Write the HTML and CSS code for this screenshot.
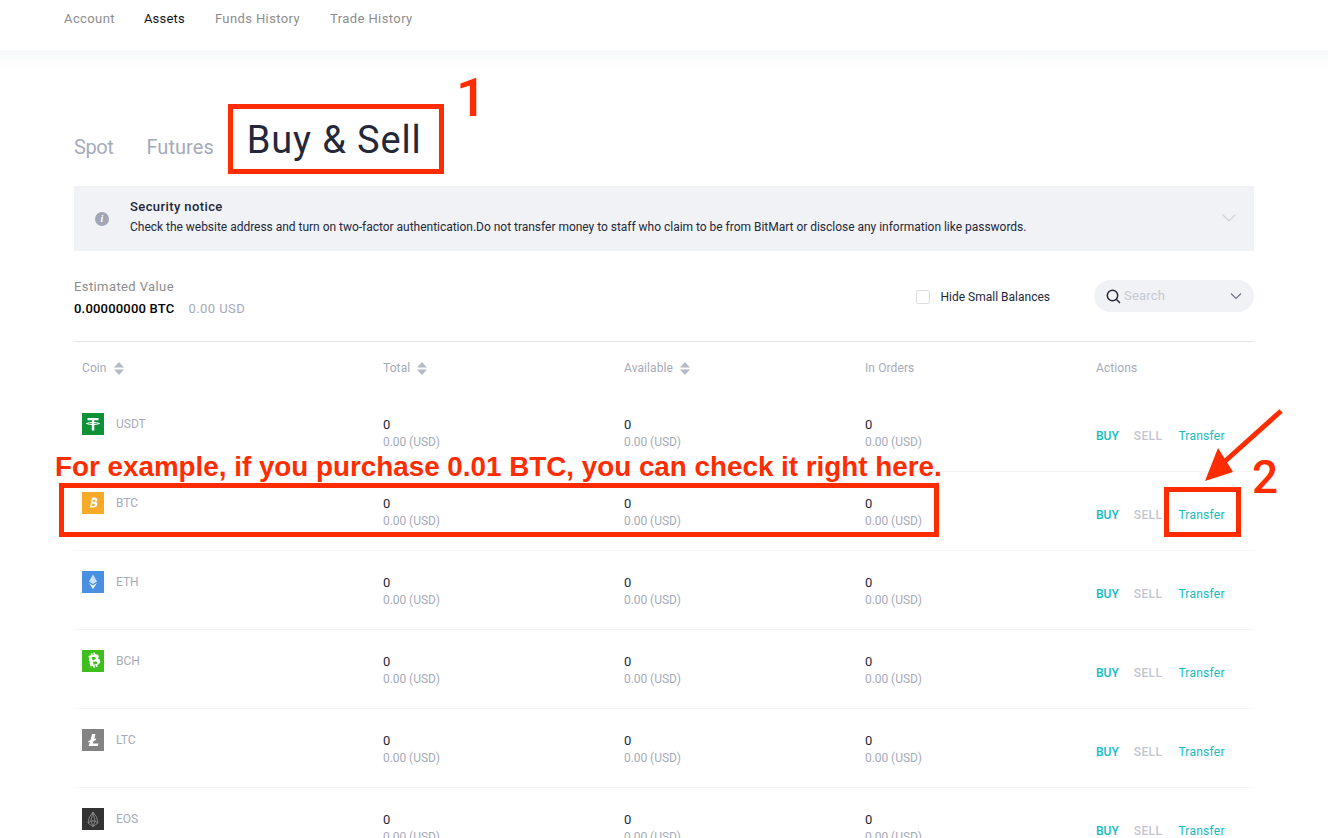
FILE: index.html
```html
<!DOCTYPE html>
<html lang="en">
<head>
<meta charset="utf-8">
<title>Assets</title>
<link rel="stylesheet" href="styles.css">
</head>
<body>
<nav class="topnav">
  <a class="navlink">Account</a>
  <a class="navlink active">Assets</a>
  <a class="navlink">Funds History</a>
  <a class="navlink">Trade History</a>
</nav>
<div class="fade"></div>
<main class="main">
  <div class="tabs">
    <span class="tab">Spot</span>
    <span class="tab">Futures</span>
    <span class="tab current">Buy &amp; Sell</span>
  </div>
  <section class="notice">
    <span class="info">i</span>
    <div class="notice-body">
      <div class="notice-title">Security notice</div>
      <div class="notice-text">Check the website address and turn on two-factor authentication.Do not transfer money to staff who claim to be from BitMart or disclose any information like passwords.</div>
    </div>
    <svg class="notice-chev" width="14" height="8" viewBox="0 0 14 8"><path d="M.5.500 7 7l6.500-6.500" fill="none" stroke="#cfd2da" stroke-width="1.200"/></svg>
  </section>
  <section class="summary">
    <div class="estimate">
      <div class="est-label">Estimated Value</div>
      <div class="est-values"><b>0.00000000 BTC</b><span>0.00 USD</span></div>
    </div>
    <label class="hide"><span class="check"></span>Hide Small Balances</label>
    <div class="search">
      <svg width="15" height="15" viewBox="0 0 15 15"><circle cx="6.500" cy="6.500" r="5.200" fill="none" stroke="#23283a" stroke-width="1.500"/><path d="m10.300 10.300 3.700 3.700" stroke="#23283a" stroke-width="1.500"/></svg>
      <span class="search-text">Search</span>
      <svg class="search-chev" width="12" height="8" viewBox="0 0 12 8"><path d="M1 1.500 6 6.500l5-5" fill="none" stroke="#6d7486" stroke-width="1.200"/></svg>
    </div>
  </section>
  <div class="table">
    <div class="row head">
      <div class="cell">Coin <svg class="sort" width="10" height="13" viewBox="0 0 10 13"><path d="M5 0 10 5.500H0zM0 7.500h10L5 13z" fill="#b6bac6"/></svg></div>
      <div class="cell">Total <svg class="sort" width="10" height="13" viewBox="0 0 10 13"><path d="M5 0 10 5.500H0zM0 7.500h10L5 13z" fill="#b6bac6"/></svg></div>
      <div class="cell">Available <svg class="sort" width="10" height="13" viewBox="0 0 10 13"><path d="M5 0 10 5.500H0zM0 7.500h10L5 13z" fill="#b6bac6"/></svg></div>
      <div class="cell">In Orders</div>
      <div class="cell">Actions</div>
    </div>

    <div class="row item">
      <div class="coin"><span class="logo usdt"><svg width="22" height="22" viewBox="0 0 22 22"><path d="M5.500 5h11v2.200h-4.200V17.500H9.800V7.200H5.500z" fill="#fff"/><path d="M4.500 10.500c3-1.300 10-1.300 13 0-3 1.400-10 1.400-13 0z" fill="none" stroke="#fff" stroke-width="1"/></svg></span><span class="sym">USDT</span></div>
      <div class="val"><span class="num">0</span><small>0.00 (USD)</small></div>
      <div class="val"><span class="num">0</span><small>0.00 (USD)</small></div>
      <div class="val"><span class="num">0</span><small>0.00 (USD)</small></div>
      <div class="acts"><a class="buy">BUY</a><a class="sell">SELL</a><a class="transfer">Transfer</a></div>
    </div>
    <div class="row item">
      <div class="coin"><span class="logo btc"><svg width="22" height="22" viewBox="0 0 22 22"><path d="M10 5.500h2.500c2 0 3 1 2.800 2.500-.1 1-.7 1.700-1.500 2 1.100.3 1.700 1.200 1.500 2.500-.3 1.900-1.600 3-3.800 3H8zm1.100 2.200-.4 2.100h1.400c.8 0 1.300-.4 1.300-1.100 0-.6-.4-1-1.100-1zm-.8 4-.5 2.300h1.600c.9 0 1.400-.5 1.400-1.300 0-.6-.5-1-1.300-1z" fill="#fff" fill-rule="evenodd"/></svg></span><span class="sym">BTC</span></div>
      <div class="val"><span class="num">0</span><small>0.00 (USD)</small></div>
      <div class="val"><span class="num">0</span><small>0.00 (USD)</small></div>
      <div class="val"><span class="num">0</span><small>0.00 (USD)</small></div>
      <div class="acts"><a class="buy">BUY</a><a class="sell">SELL</a><a class="transfer">Transfer</a></div>
    </div>
    <div class="row item">
      <div class="coin"><span class="logo eth"><svg width="22" height="22" viewBox="0 0 22 22"><path d="M11 3.500 7 10.500l4 2.500 4-2.500z" fill="#cfe2fb"/><path d="m7 12 4 6 4-6-4 2.500z" fill="#fff"/></svg></span><span class="sym">ETH</span></div>
      <div class="val"><span class="num">0</span><small>0.00 (USD)</small></div>
      <div class="val"><span class="num">0</span><small>0.00 (USD)</small></div>
      <div class="val"><span class="num">0</span><small>0.00 (USD)</small></div>
      <div class="acts"><a class="buy">BUY</a><a class="sell">SELL</a><a class="transfer">Transfer</a></div>
    </div>
    <div class="row item">
      <div class="coin"><span class="logo bch"><svg width="22" height="22" viewBox="0 0 22 22"><path d="M6.500 6 9 5.300 8.600 3.500l1.600-.4.500 1.800 1-.3-.5-1.800 1.600-.4.500 1.900c1.900-.2 3.200.5 3.400 2 .1 1-.3 1.800-1 2.300 1.300.2 2.200 1 2.500 2.300.4 2-.8 3.300-3 3.900l.5 1.900-1.600.4-.5-1.800-1 .3.500 1.800-1.600.4-.5-1.900-2.600.6zm3.300 1.300.7 2.900 2-.5c1-.3 1.400-.9 1.200-1.700-.2-.8-.9-1.100-1.800-.9zm1.100 4.500.8 3 2.300-.6c1-.3 1.500-.9 1.300-1.800-.2-.9-1-1.200-2-.9z" fill="#fff" fill-rule="evenodd"/></svg></span><span class="sym">BCH</span></div>
      <div class="val"><span class="num">0</span><small>0.00 (USD)</small></div>
      <div class="val"><span class="num">0</span><small>0.00 (USD)</small></div>
      <div class="val"><span class="num">0</span><small>0.00 (USD)</small></div>
      <div class="acts"><a class="buy">BUY</a><a class="sell">SELL</a><a class="transfer">Transfer</a></div>
    </div>
    <div class="row item">
      <div class="coin"><span class="logo ltc"><svg width="22" height="22" viewBox="0 0 22 22"><path d="M10 5h3.500l-1.300 5 2-.7-.6 2-2 .8-.8 2.400h5.700l-.7 2.500H6.700l1.300-4.200-1.900.7.500-1.800 2-.8z" fill="#fff"/></svg></span><span class="sym">LTC</span></div>
      <div class="val"><span class="num">0</span><small>0.00 (USD)</small></div>
      <div class="val"><span class="num">0</span><small>0.00 (USD)</small></div>
      <div class="val"><span class="num">0</span><small>0.00 (USD)</small></div>
      <div class="acts"><a class="buy">BUY</a><a class="sell">SELL</a><a class="transfer">Transfer</a></div>
    </div>
    <div class="row item">
      <div class="coin"><span class="logo eos"><svg width="22" height="22" viewBox="0 0 22 22"><path d="M11 4 7.500 9 6 15l5 3.500 5-3.500-1.500-6zM11 4 9 13l2 5.500 2-5.500zM6 15l3-2h4l3 2" fill="none" stroke="#8a8a8a" stroke-width=".9"/></svg></span><span class="sym">EOS</span></div>
      <div class="val"><span class="num">0</span><small>0.00 (USD)</small></div>
      <div class="val"><span class="num">0</span><small>0.00 (USD)</small></div>
      <div class="val"><span class="num">0</span><small>0.00 (USD)</small></div>
      <div class="acts"><a class="buy">BUY</a><a class="sell">SELL</a><a class="transfer">Transfer</a></div>
    </div>
  </div>
</main>

<div class="mark mark-tab"></div>
<div class="mark mark-row"></div>
<div class="mark mark-transfer"></div>
<div class="note">For example, if you purchase 0.01 BTC, you can check it right here.</div>
<div class="digit d1">1</div>
<div class="digit d2">2</div>
<svg class="arrow" width="90" height="80" viewBox="0 0 90 80"><path d="M80 5 22 57" stroke="#ff2c00" stroke-width="5" fill="none"/><path d="M4 75 17 42 32 66z" fill="#ff2c00"/></svg>
</body>
</html>
```
FILE: styles.css
```css
* { box-sizing: border-box; }
html, body { margin: 0; height: 838px; overflow: hidden; background: #fff; }
body { position: relative; font-family: Roboto, "Liberation Sans", sans-serif; font-size: 12px; color: #23283a; }
.topnav { height: 50px; display: flex; gap: 30px; padding: 10px 0 0 64px; font-size: 13px; line-height: 17px; letter-spacing: .4px; }
.navlink { color: #8d8d8d; }
.navlink.active { color: #111; letter-spacing: .2px; margin-left: -1px; }
.fade { height: 20px; background: linear-gradient(#f7f8f9, #fff); }
.main { margin: 0 74px; }
.tabs { height: 116px; display: flex; align-items: flex-end; gap: 33px; padding-bottom: 25px; }
.tab { font-size: 20px; line-height: 27px; color: #a6abb9; letter-spacing: .05px; }
.tab:first-child { letter-spacing: -.4px; }
.tab.current { font-size: 38px; line-height: 46px; color: #23283a; margin-bottom: -2px; letter-spacing: .85px; }
.notice { height: 65px; background: #f1f2f6; display: flex; align-items: center; padding: 0 18px 0 21px; }
.info { width: 14px; height: 14px; border-radius: 50%; background: #a0a6b6; color: #fff; font: italic 700 10px/14px "Liberation Serif", serif; text-align: center; flex: none; }
.notice-body { flex: 1; margin: -3px 0 0 21px; }
.notice-title { font-size: 13px; line-height: 18px; margin-bottom: 2px; font-weight: 500; color: #23283a; letter-spacing: .4px; }
.notice-text { font-size: 12px; line-height: 18px; color: #23283a; letter-spacing: -.02px; }
.notice-chev { flex: none; margin-top: -1px; }
.summary { height: 91px; display: flex; align-items: center; border-bottom: 1px solid #e6e7ee; }
.estimate { flex: 1; margin-top: 3px; }
.est-label { font-size: 13px; line-height: 20px; color: #8d8d8d; letter-spacing: .4px; }
.est-values { display: flex; gap: 14px; margin-top: 2px; font-size: 13px; line-height: 20px; color: #a6abb9; letter-spacing: .2px; }
.est-values span { letter-spacing: .45px; }
.est-values b { font-weight: 500; color: #000; }
.hide { display: flex; align-items: center; gap: 10px; color: #23283a; font-size: 12px; margin-right: 44px; margin-top: 1px; }
.check { width: 14px; height: 14px; border: 1px solid #dcdee5; border-radius: 2px; background: #fff; margin-right: 1px; }
.search { width: 160px; height: 32px; border-radius: 16px; background: #f1f2f6; display: flex; align-items: center; padding: 0 12px; }
.search-text { flex: 1; margin-left: 3px; font-size: 13px; color: #c6c9d3; letter-spacing: .2px; margin-top: -2px; }
.table { display: block; }
.row { display: grid; grid-template-columns: 309px 241px 241px 231px 158px; }
.head { height: 51px; padding-top: 1px; align-items: center; color: #a6abb9; font-size: 12px; letter-spacing: .1px; }
.cell { display: flex; align-items: center; gap: 4px; }
.cell:first-child { padding-left: 8px; }
.sort { margin-left: 3px; }
.item { height: 79px; border-bottom: 1px solid #f3f4f6; }
.coin { display: flex; align-items: flex-start; padding: 20px 0 0 8px; }
.logo { width: 22px; height: 22px; flex: none; display: block; }
.logo svg { display: block; }
.usdt { background: #0f9137; }
.btc { background: #f7a928; }
.eth { background: #4a90e2; }
.bch { background: #3fbf1e; }
.ltc { background: #838383; }
.eos { background: #333; }
.sym { margin: 1px 0 0 12px; line-height: 20px; color: #a6abb9; font-size: 12px; }
.val { padding-top: 23px; font-size: 13px; line-height: 18px; display: flex; flex-direction: column; align-items: flex-start; }
.num { color: #23283a; }
.val small { font-size: 12px; line-height: 17px; color: #a6abb9; letter-spacing: -.05px; }
.acts { display: flex; align-items: center; gap: 15px; font-size: 12px; padding-top: 8px; }
.buy, .transfer { color: #12bcc0; }
.buy { font-weight: 500; }
.sell { color: #c3c6d0; font-weight: 500; letter-spacing: .4px; }
.transfer { margin-left: 1px; letter-spacing: .25px; }

.mark { position: absolute; border: 5px solid #ff2c00; }
.mark-tab { left: 228px; top: 104px; width: 216px; height: 70px; }
.mark-row { left: 59px; top: 483px; width: 880px; height: 54px; }
.mark-transfer { left: 1164px; top: 487px; width: 77px; height: 50px; }
.note { position: absolute; left: 55px; top: 451px; font: 700 27.800px/32px "Liberation Sans", Arial, sans-serif; color: #ff2c00; white-space: nowrap; }
.digit { position: absolute; color: #ff2c00; font-family: Roboto, "Liberation Sans", sans-serif; font-weight: 500; }
.d1 { left: 456px; top: 66px; font-size: 54px; line-height: 64px; }
.d2 { left: 1252px; top: 451px; font-size: 46px; line-height: 52px; }
.arrow { position: absolute; left: 1201px; top: 406px; }
```
